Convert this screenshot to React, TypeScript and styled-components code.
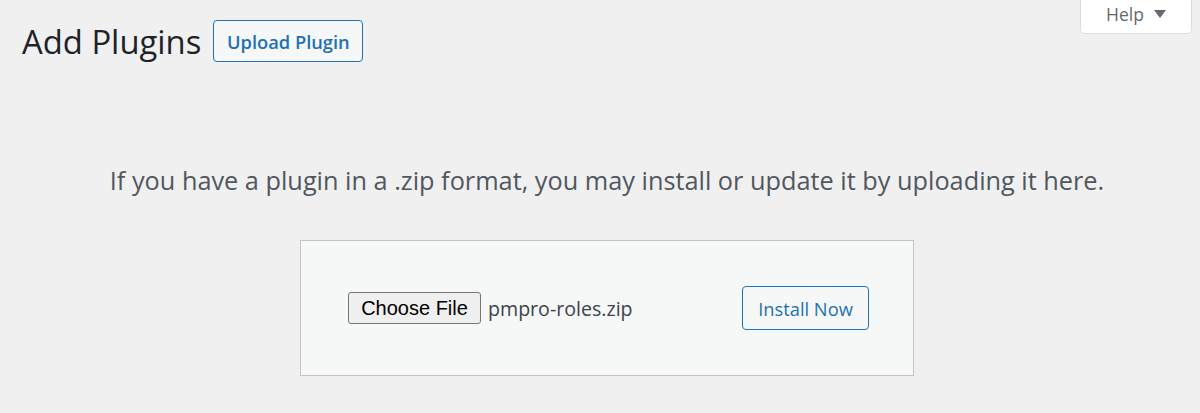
import styled, { createGlobalStyle } from "styled-components";

const GlobalStyle = createGlobalStyle`
  html, body {
    margin: 0;
    padding: 0;
    background: #f0f0f1;
    font-family: "Open Sans", "Noto Sans", sans-serif;
    color: #3c434a;
  }
`;

const Page = styled.div`
  width: 1200px;
  height: 413px;
  overflow: hidden;
  box-sizing: border-box;
  padding: 0 8px 0 22px;
`;

const TopBar = styled.div`
  display: flex;
  justify-content: space-between;
  align-items: flex-start;
`;

const TitleRow = styled.div`
  display: flex;
  align-items: center;
  gap: 12px;
  padding-top: 20px;
`;

const Title = styled.h1`
  margin: 0;
  font-size: 32.8px;
  font-weight: 400;
  color: #1d2327;
  line-height: 41px;
`;

const OutlineButton = styled.button<{ $height: number; $width: number; $weight?: number }>`
  box-sizing: border-box;
  height: ${(p) => p.$height}px;
  width: ${(p) => p.$width}px;
  padding: 0;
  border: 1px solid #2271b1;
  border-radius: 4px;
  background: #f6f7f7;
  color: #2271b1;
  font-family: "Open Sans", "Noto Sans", sans-serif;
  font-size: 18.3px;
  font-weight: ${(p) => p.$weight ?? 400};
  cursor: pointer;
`;

const HelpTab = styled.button`
  box-sizing: border-box;
  width: 112px;
  height: 35px;
  margin-top: -1px;
  border: 1px solid #dcdcde;
  border-top: none;
  border-radius: 0 0 5px 5px;
  background: #fff;
  color: #646970;
  font-family: "Open Sans", "Noto Sans", sans-serif;
  font-size: 17.5px;
  display: flex;
  align-items: center;
  justify-content: center;
  gap: 10px;
  padding: 0 0 4px 0;
`;

const Caret = styled.span`
  width: 0;
  height: 0;
  border-left: 6px solid transparent;
  border-right: 6px solid transparent;
  border-top: 8px solid #646970;
`;

const Help = styled.p`
  margin: 0;
  padding: 101px 0 0 0;
  text-align: center;
  font-size: 25.3px;
  line-height: 35px;
  color: #50575e;
`;

const FormBox = styled.div`
  box-sizing: border-box;
  width: 614px;
  height: 136px;
  margin: 42px 0 0 278px;
  background: #f6f7f7;
  border: 1px solid #c3c4c7;
  display: flex;
  align-items: center;
  justify-content: space-between;
  padding: 0 44px 0 47px;
`;

const FilePicker = styled.div`
  display: flex;
  align-items: center;
  gap: 7px;
`;

const ChooseButton = styled.span`
  box-sizing: border-box;
  height: 32px;
  width: 133px;
  display: inline-flex;
  align-items: center;
  justify-content: center;
  border: 1px solid #767676;
  border-radius: 3px;
  background: #efefef;
  color: #000;
  font-family: "Liberation Sans", Arial, sans-serif;
  font-size: 20px;
`;

const FileName = styled.span`
  font-size: 19.6px;
  color: #3c434a;
`;

export default function App() {
  return (
    <>
      <GlobalStyle />
      <Page>
        <TopBar>
          <TitleRow>
            <Title>Add Plugins</Title>
            <OutlineButton $height={42} $width={150} $weight={600}>
              Upload Plugin
            </OutlineButton>
          </TitleRow>
          <HelpTab>
            Help <Caret />
          </HelpTab>
        </TopBar>
        <Help>
          If you have a plugin in a .zip format, you may install or update it by uploading it here.
        </Help>
        <FormBox>
          <FilePicker>
            <ChooseButton>Choose File</ChooseButton>
            <FileName>pmpro-roles.zip</FileName>
          </FilePicker>
          <OutlineButton $height={44} $width={127}>
            Install Now
          </OutlineButton>
        </FormBox>
      </Page>
    </>
  );
}
